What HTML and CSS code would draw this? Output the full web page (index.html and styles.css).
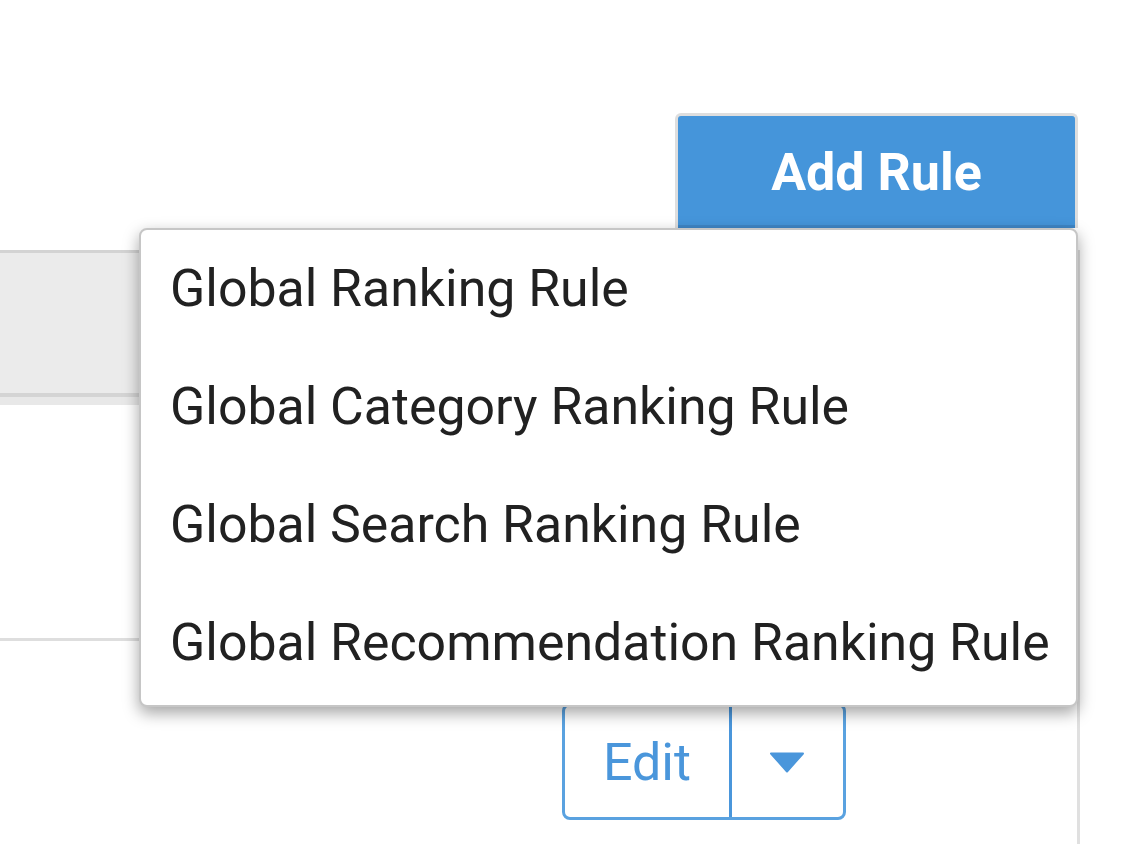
FILE: index.html
```html
<!DOCTYPE html>
<html>
<head>
<meta charset="utf-8">
<link rel="stylesheet" href="styles.css">
</head>
<body>
<div class="page">
  <div class="toolbar">
    <button class="add-rule">Add Rule</button>
  </div>
  <div class="panel">
    <div class="table-head"></div>
    <div class="table-row"></div>
    <div class="actions-row">
      <div class="split-btn">
        <span class="split-main">Edit</span>
        <span class="split-caret">
          <svg width="36" height="21" viewBox="0 0 36 21"><path d="M2 1.5 H34 L18 19.5 Z" fill="#4a96db" stroke="#4a96db" stroke-width="2" stroke-linejoin="round"/></svg>
        </span>
      </div>
    </div>
  </div>
  <ul class="menu">
    <li class="menu-item">Global Ranking Rule</li>
    <li class="menu-item">Global Category Ranking Rule</li>
    <li class="menu-item">Global Search Ranking Rule</li>
    <li class="menu-item">Global Recommendation Ranking Rule</li>
  </ul>
</div>
</body>
</html>
```
FILE: styles.css
```css
html, body {
  margin: 0;
  padding: 0;
  background: #ffffff;
}
body {
  font-family: Roboto, "Liberation Sans", sans-serif;
  width: 1144px;
  height: 844px;
  overflow: hidden;
}
.page {
  position: relative;
  width: 1144px;
  height: 844px;
}
.toolbar {
  display: flex;
  justify-content: flex-end;
  padding-top: 113px;
  padding-right: 66px;
}
.add-rule {
  box-sizing: border-box;
  width: 403px;
  height: 115px;
  border: 3px solid #dedede;
  border-bottom: none;
  border-radius: 6px 6px 0 0;
  background: #4595da;
  color: #ffffff;
  font-family: Roboto, "Liberation Sans", sans-serif;
  font-weight: 700;
  font-size: 52px;
  padding: 0;
  box-shadow: inset 0 -3px 0 #3f86c6;
}
.panel {
  width: 1077px;
  border-right: 3px solid #e0e0e0;
  height: 616px;
}
.table-head {
  margin-top: 22px;
  height: 140px;
  border-top: 3px solid #d3d3d3;
  border-bottom: 4px solid #d4d4d4;
  background: #ebebeb;
  box-shadow: 0 8px 0 #e8e8e8;
}
.table-row {
  height: 241px;
  border-bottom: 3px solid #dedede;
}
.actions-row {
  display: flex;
  justify-content: flex-end;
  padding-top: 62px;
  padding-right: 231px;
}
.split-btn {
  box-sizing: border-box;
  display: flex;
  width: 284px;
  height: 117px;
  border: 3px solid #5aa2e0;
  border-radius: 8px;
  color: #4a96db;
}
.split-main {
  width: 164px;
  display: flex;
  align-items: center;
  justify-content: center;
  font-size: 52px;
  padding-top: 2px;
  border-right: 3px solid #4a96db;
}
.split-caret {
  flex: 1;
  display: flex;
  align-items: center;
  justify-content: center;
  padding-top: 2px;
  padding-right: 2px;
}
.split-caret svg {
  display: block;
}
.menu {
  position: absolute;
  top: 228px;
  left: 139px;
  box-sizing: border-box;
  width: 939px;
  height: 479px;
  margin: 0;
  padding: 0;
  list-style: none;
  background: #ffffff;
  border: 2px solid #c6c6c6;
  border-radius: 8px;
  box-shadow: 0 6px 16px rgba(0, 0, 0, 0.36);
}
.menu-item {
  height: 118px;
  display: flex;
  align-items: center;
  padding-left: 29px;
  padding-bottom: 2px;
  box-sizing: border-box;
  font-size: 51.8px;
  color: #212121;
  white-space: nowrap;
}
```
